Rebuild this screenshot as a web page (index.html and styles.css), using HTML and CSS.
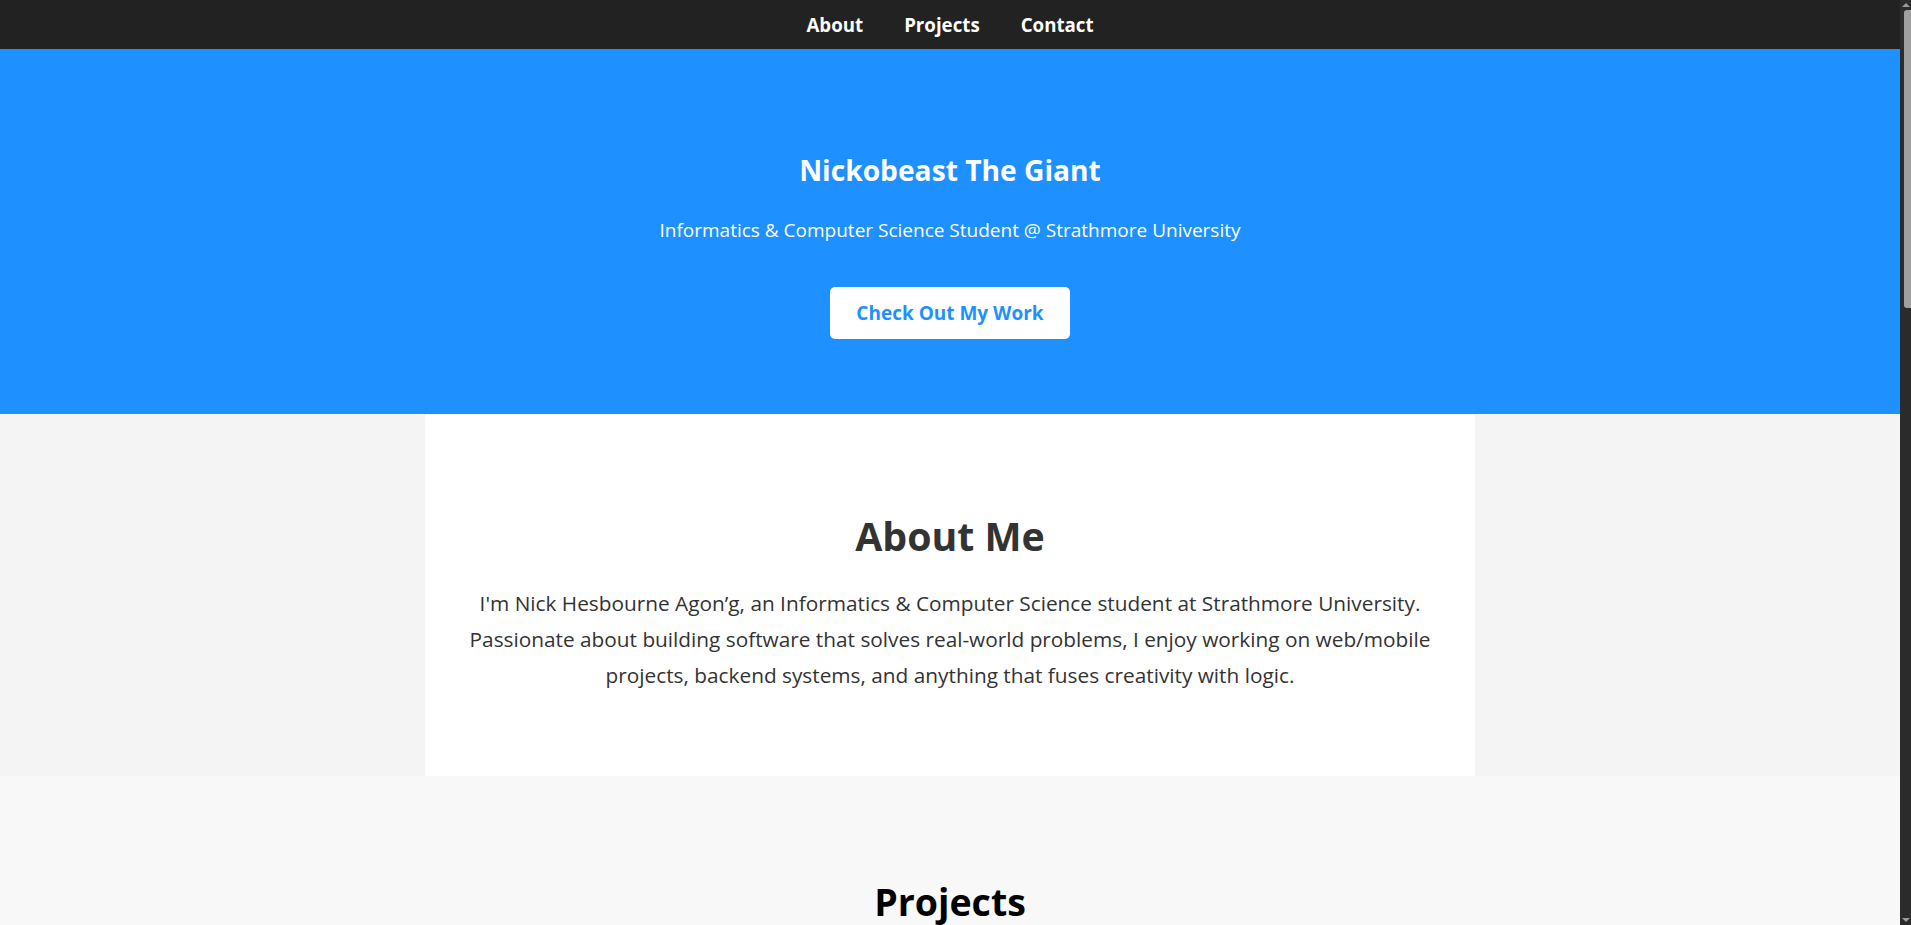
FILE: index.html
```html
<!DOCTYPE html>
<html lang="en">
<head>
<meta charset="UTF-8">
<title>Nickobeast The Giant</title>
<link rel="stylesheet" href="styles.css">
</head>
<body>
<div class="page">
  <nav class="navbar">
    <ul class="nav-links">
      <li><a href="#about">About</a></li>
      <li><a href="#projects">Projects</a></li>
      <li><a href="#contact">Contact</a></li>
    </ul>
  </nav>

  <header class="hero">
    <h1 class="hero-title">Nickobeast The Giant</h1>
    <p class="hero-sub">Informatics &amp; Computer Science Student @ Strathmore University</p>
    <a class="btn" href="#projects">Check Out My Work</a>
  </header>

  <section class="about-wrap" id="about">
    <div class="about-card">
      <h2 class="section-title">About Me</h2>
      <p class="about-text">I'm Nick Hesbourne Agon’g, an Informatics &amp; Computer Science student at Strathmore University. Passionate about building software that solves real-world problems, I enjoy working on web/mobile projects, backend systems, and anything that fuses creativity with logic.</p>
    </div>
  </section>

  <section class="projects" id="projects">
    <h2 class="section-title dark">Projects</h2>
    <div class="project-grid">
      <div class="project-card">
        <h3>Portfolio Website</h3>
        <p>A personal site built with HTML and CSS.</p>
      </div>
      <div class="project-card">
        <h3>Mobile App</h3>
        <p>A cross-platform mobile application.</p>
      </div>
      <div class="project-card">
        <h3>Backend API</h3>
        <p>A REST service for student records.</p>
      </div>
    </div>
  </section>

  <section class="contact" id="contact">
    <h2 class="section-title">Contact</h2>
    <p>Reach out any time.</p>
  </section>
</div>

<div class="scrollbar" aria-hidden="true">
  <span class="sb-arrow sb-up"></span>
  <span class="sb-thumb"></span>
  <span class="sb-fill"></span>
  <span class="sb-arrow sb-down"></span>
</div>
</body>
</html>
```

FILE: styles.css
```css
* {
  box-sizing: border-box;
}

body {
  margin: 0;
  font-family: "Open Sans", "Noto Sans", sans-serif;
  color: #333;
  background: #f4f4f4;
  display: flex;
  align-items: flex-start;
}

.page {
  flex: 1;
  min-width: 0;
}

/* dark scrollbar strip on the right */
.scrollbar {
  position: sticky;
  top: 0;
  width: 11px;
  height: 100vh;
  flex: none;
  background: #2b2b2b;
  display: flex;
  flex-direction: column;
  align-items: flex-end;
}

.sb-arrow {
  width: 0;
  height: 0;
  margin: 3px 1px 0 0;
  border-left: 4px solid transparent;
  border-right: 4px solid transparent;
}

.sb-up {
  border-bottom: 4px solid #9a9a9a;
}

.sb-down {
  margin: 0 1px 3px 0;
  border-top: 4px solid #9a9a9a;
}

.sb-thumb {
  width: 7px;
  height: 298px;
  margin-top: 3px;
  background: #9f9f9f;
  border-radius: 3px 0 0 3px;
}

.sb-fill {
  flex: 1;
}

.navbar {
  background: #222;
  height: 49px;
  display: flex;
  align-items: center;
  justify-content: center;
}

.nav-links {
  list-style: none;
  margin: 0;
  padding: 0;
  display: flex;
  gap: 41px;
}

.nav-links a {
  color: #fff;
  text-decoration: none;
  font-weight: 700;
  font-size: 18.7px;
  line-height: 26px;
}

.hero {
  background: #1e90ff;
  color: #fff;
  text-align: center;
  padding: 80px 20px 75px;
}

.hero-title {
  margin: 23px 0 29px;
  font-size: 28.2px;
  line-height: 36px;
  font-weight: 700;
}

.hero-sub {
  margin: 0 0 43.5px;
  font-size: 19px;
  line-height: 26px;
}

.btn {
  display: inline-block;
  background: #fff;
  color: #1e90ff;
  text-decoration: none;
  font-weight: 700;
  font-size: 19px;
  line-height: 26px;
  padding: 13px 26px;
  border-radius: 5px;
}

.about-wrap {
  background: #f4f4f4;
}

.about-card {
  background: #fff;
  max-width: 1050px;
  margin: 0 auto;
  padding: 60px 38px;
  text-align: center;
}

.section-title {
  margin: 39px 0 26.5px;
  font-size: 39.3px;
  line-height: 46px;
  font-weight: 700;
  color: #333;
}

.section-title.dark {
  color: #000;
  font-size: 37.5px;
  margin-bottom: 28px;
}

.about-text {
  margin: 0 0 23px;
  font-size: 20.8px;
  line-height: 36px;
  color: #333;
}

.projects {
  background: #f8f8f8;
  padding: 64px 40px 60px;
  text-align: center;
}

.project-grid {
  display: grid;
  grid-template-columns: repeat(3, 300px);
  justify-content: center;
  gap: 30px;
}

.project-card {
  background: #fff;
  padding: 20px;
  border-radius: 6px;
}

.contact {
  background: #f4f4f4;
  padding: 60px 40px;
  text-align: center;
}
```
